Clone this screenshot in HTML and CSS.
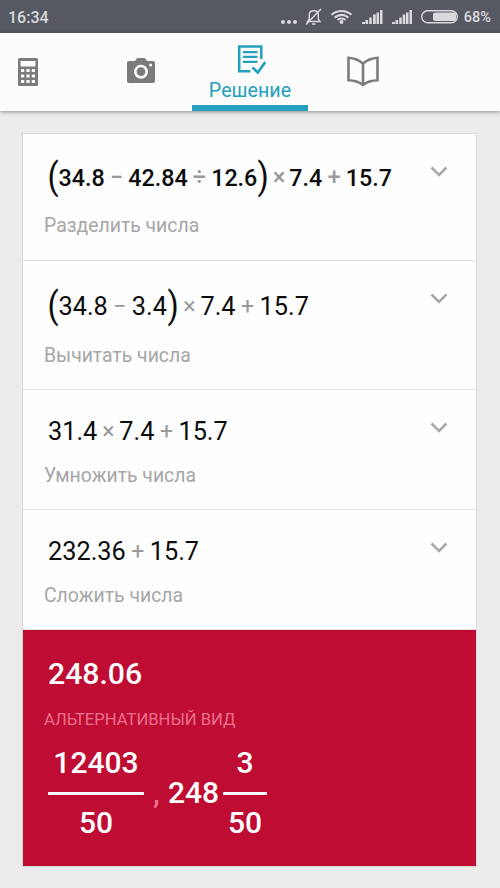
FILE: index.html
```html
<!DOCTYPE html>
<html lang="ru">
<head>
    <meta charset="UTF-8">
    <meta name="viewport" content="width=device-width, initial-scale=1.0">
    <title>Решение</title>
    <link rel="stylesheet" href="styles.css">
</head>
<body>
    <div class="status-bar">
        <span class="time">16:34</span>
        <svg class="status-icons" width="178" height="33" viewBox="280 0 178 33">
            <g fill="#d9dade">
                <circle cx="283" cy="22" r="2"/>
                <circle cx="289" cy="22" r="2"/>
                <circle cx="295" cy="22" r="2"/>
                <circle cx="341.500" cy="22" r="2"/>
                <path d="M362 24v-2h3v2zM365.500 24v-4h2.600v4zM369.200 24v-6.500h2.600v6.500zM373 24v-9.500h2.800v9.500zM376.500 24v-11.500h2.500v11.500zM380 24v-14h2.500v14z"/>
                <path d="M392 24v-2h3v2zM395.500 24v-4h2.600v4zM399.200 24v-6.500h2.600v6.500zM402.700 24v-9.500h2.600v9.500zM406 24v-11.500h2.500v11.500zM409.500 24v-14h2.500v14z"/>
                <rect x="433" y="12.500" width="23" height="8.500" rx="2.500"/>
            </g>
            <g fill="none" stroke="#d9dade" stroke-width="1.400">
                <path d="M307.500 21.500h12.500l-1.700-2.500v-4.500c0-5-9-5-9 0v4.500zM312 24h3.500M306 24.500l15-15.500"/>
                <path d="M331.500 14.700c6-5 14-5 20 0M334.600 17.600c4.500-3.500 9.500-3.500 13.800 0M337.400 20c2.500-1.700 5.700-1.700 8.200 0" stroke-width="2"/>
                <rect x="421.700" y="10.700" width="35.600" height="12" rx="6"/>
            </g>
        </svg>
        <span class="battery">68%</span>
    </div>

    <div class="tabs">
        <div class="tab tab-calc">
            <svg width="20" height="28" viewBox="0 0 20 28">
                <rect width="20" height="28" rx="1.500" fill="#7b7b7b"/>
                <path fill="#fcfcfc" d="M2.500 3h15v5.500h-15zM3 11h3.200v3H3zM8.400 11h3.200v3H8.400zM13.800 11h3.200v3h-3.200zM3 16.500h3.200v3H3zM8.400 16.500h3.200v3H8.400zM13.800 16.500h3.200v3h-3.200zM3 22h3.200v3H3zM8.400 22h3.200v3H8.400zM13.800 22h3.200v3h-3.200z"/>
            </svg>
        </div>
        <div class="tab tab-camera">
            <svg width="28" height="25" viewBox="0 0 28 25">
                <path fill="#7b7b7b" d="M2 3h6l1.500-2.200Q10 0 11 0h6q1 0 1.500.8L20 3h6q2 0 2 2v18q0 2-2 2H2q-2 0-2-2V5q0-2 2-2z"/>
                <circle cx="14" cy="13.700" r="5.700" fill="none" stroke="#fcfcfc" stroke-width="2.600"/>
                <circle cx="23.700" cy="7" r="1.500" fill="#fcfcfc"/>
            </svg>
        </div>
        <div class="tab tab-solution active">
            <svg width="30" height="31" viewBox="0 0 30 31">
                <g fill="none" stroke="#249fbd" stroke-width="2.500">
                    <path d="M13.500 27.200H2.200V2.500h22.100V15"/>
                    <path d="M6 8.200h14.500M6 12.900h14.500M6 17.800h14.500" stroke-width="2.200"/>
                    <path d="M15.500 23.500l5.300 5 7.500-10.500" stroke-width="2.700"/>
                </g>
            </svg>
            <span>Решение</span>
        </div>
        <div class="tab tab-book">
            <svg width="32" height="31" viewBox="0 0 32 31">
                <path d="M16 7.500Q10 2.500 1.500 1.800v22.500Q10 24.500 16 29q6-4.500 14.500-4.700V1.800Q22 2.500 16 7.500zV29" fill="none" stroke="#7b7b7b" stroke-width="2.600"/>
            </svg>
        </div>
    </div>

    <div class="card">
        <div class="step step-current">
            <div class="expression">
                <span class="paren">(</span><span>34.8</span><span class="op">−</span><span>42.84</span><span class="op">÷</span><span>12.6</span><span class="paren">)</span><span class="op op-times">×</span><span>7.4</span><span class="op">+</span><span>15.7</span>
            </div>
            <div class="hint">Разделить числа</div>
            <svg class="chevron" width="18" height="12" viewBox="0 0 18 12"><path d="M1.500 1.500L9 9l7.500-7.500"/></svg>
        </div>
        <div class="step step-parens">
            <div class="expression">
                <span class="paren">(</span><span>34.8</span><span class="op">−</span><span>3.4</span><span class="paren">)</span><span class="op op-times">×</span><span>7.4</span><span class="op">+</span><span>15.7</span>
            </div>
            <div class="hint">Вычитать числа</div>
            <svg class="chevron" width="18" height="12" viewBox="0 0 18 12"><path d="M1.500 1.500L9 9l7.500-7.500"/></svg>
        </div>
        <div class="step">
            <div class="expression">
                <span>31.4</span><span class="op op-times">×</span><span>7.4</span><span class="op">+</span><span>15.7</span>
            </div>
            <div class="hint">Умножить числа</div>
            <svg class="chevron" width="18" height="12" viewBox="0 0 18 12"><path d="M1.500 1.500L9 9l7.500-7.500"/></svg>
        </div>
        <div class="step">
            <div class="expression">
                <span>232.36</span><span class="op">+</span><span>15.7</span>
            </div>
            <div class="hint">Сложить числа</div>
            <svg class="chevron" width="18" height="12" viewBox="0 0 18 12"><path d="M1.500 1.500L9 9l7.500-7.500"/></svg>
        </div>
        <div class="result">
            <div class="answer">248.06</div>
            <div class="alt-title">АЛЬТЕРНАТИВНЫЙ ВИД</div>
            <div class="alt-forms">
                <div class="fraction fraction-wide">
                    <span>12403</span>
                    <span class="line"></span>
                    <span>50</span>
                </div>
                <span class="comma">,</span>
                <span class="whole">248</span>
                <div class="fraction">
                    <span>3</span>
                    <span class="line"></span>
                    <span>50</span>
                </div>
            </div>
        </div>
    </div>
</body>
</html>
```

FILE: styles.css
```css
* {
    box-sizing: border-box;
}

body {
    margin: 0;
    height: 888px;
    overflow: hidden;
    background-color: #ececec;
    font-family: Roboto, sans-serif;
    color: #0c0c0c;
}

svg {
    display: block;
    flex: none;
}

.status-bar {
    display: flex;
    align-items: center;
    height: 33px;
    padding: 0 9px 0 8px;
    background-color: #565961;
    color: #d9dade;
    font-weight: 500;
}

.time {
    width: 272px;
    font-size: 16px;
    line-height: 33px;
    padding-top: 2px;
}

.battery {
    margin-left: 6px;
    font-size: 14.500px;
    line-height: 33px;
    padding-top: 2px;
}

.tabs {
    display: flex;
    height: 78px;
    background-color: #fcfcfc;
    box-shadow: 0 1px 4px rgba(0, 0, 0, 0.4);
}

.tab {
    display: flex;
    flex-direction: column;
    align-items: center;
}

.tab-calc {
    width: 90px;
    align-items: flex-start;
    padding: 25px 0 0 18px;
}

.tab-camera {
    width: 102px;
    padding-top: 25px;
}

.tab-solution {
    width: 116px;
    padding-top: 11px;
    font-size: 19.700px;
    line-height: 24px;
    color: #249fbd;
}

.tab-solution svg {
    margin-left: 4px;
}

.tab-solution span {
    margin-top: 4px;
}

.active {
    border-bottom: 6px solid #249fbd;
}

.tab-book {
    width: 109px;
    padding-top: 23px;
}

.card {
    width: 455px;
    margin: 22px 0 0 22px;
    border: 1px solid #d9d9d9;
    background-color: #fefefe;
}

.step {
    position: relative;
    height: 120px;
    padding: 25px 20px 0 21px;
    border-bottom: 1px solid #e2e2e2;
}

.step-current {
    height: 127px;
}

.step-parens {
    height: 129px;
}

.expression {
    display: flex;
    align-items: center;
    height: 34px;
    margin-left: 4px;
    font-size: 25.300px;
    line-height: 34px;
    white-space: nowrap;
}

.step-current .expression {
    margin-top: 2px;
    margin-left: 3px;
    font-size: 23.300px;
    font-weight: 500;
}

.step-parens .expression {
    margin-top: 4px;
    margin-left: 3px;
}

.paren {
    width: 11.500px;
    font-size: 36px;
    font-weight: 400;
    transform: translateY(-1px) scaleX(0.9);
}

.op {
    width: 24px;
    text-align: center;
    color: #999;
    font-size: 23px;
}

.op-times {
    width: 22px;
}

.step-current .op {
    width: 23.500px;
}

.step-current .op-times {
    width: 20.500px;
}

.hint {
    margin-top: 15px;
    font-size: 19.400px;
    line-height: 24px;
    color: #a6a6a6;
}

.step-current .hint {
    margin-top: 19px;
}

.step-parens .hint {
    margin-top: 20px;
}

.chevron {
    position: absolute;
    top: 32px;
    right: 28px;
    fill: none;
    stroke: #a8a8a8;
    stroke-width: 2.500;
}

.result {
    height: 236px;
    padding: 26px 0 0 21px;
    background-color: #be0c33;
    color: #fff;
    font-weight: 500;
}

.answer {
    margin-left: 4px;
    font-size: 30.200px;
    line-height: 36px;
}

.alt-title {
    margin-top: 18px;
    font-size: 16.600px;
    line-height: 20px;
    font-weight: 400;
    color: #ec718c;
}

.alt-forms {
    display: flex;
    align-items: center;
    margin: 15px 0 0 4px;
    font-size: 30px;
    line-height: 36px;
}

.fraction {
    display: flex;
    flex-direction: column;
    align-items: center;
    width: 44px;
}

.fraction-wide {
    width: 96px;
}

.line {
    width: 100%;
    height: 3px;
    margin: 11px 0 10px;
    border-radius: 1px;
    background-color: #fff;
}

.comma {
    width: 24px;
    padding-left: 9px;
    color: #ec718c;
}

.whole {
    width: 55px;
}
```
